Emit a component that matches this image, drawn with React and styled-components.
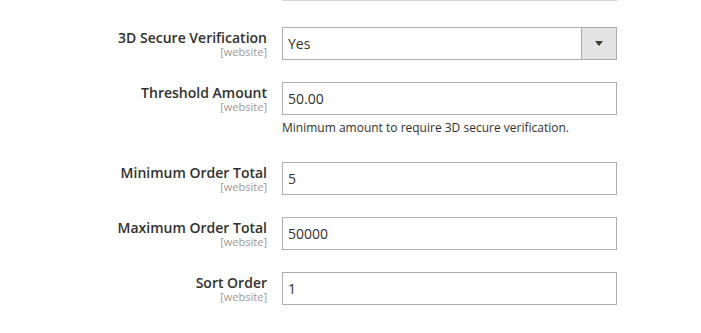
import styled, { createGlobalStyle } from "styled-components";

const GlobalStyle = createGlobalStyle`
  body {
    margin: 0;
    background: #fff;
    font-family: "Open Sans", "Liberation Sans", sans-serif;
    color: #303030;
  }
`;

const Page = styled.div`
  width: 701px;
  height: 333px;
  overflow: hidden;
  background: #fff;
`;

const Row = styled.div`
  display: grid;
  grid-template-columns: 267px 335px;
  column-gap: 15px;
  margin-bottom: ${(p) => p.gap || 22}px;
`;

const Rule = styled.div`
  grid-column: 2;
  height: 1px;
  background: #d6d6d6;
`;

const Label = styled.div`
  text-align: right;
  padding-top: 2px;
`;

const Title = styled.div`
  font-size: 14px;
  font-weight: 600;
  line-height: 17px;
  color: #303030;
`;

const Scope = styled.div`
  font-size: 11px;
  line-height: 12px;
  color: #999;
`;

const Control = styled.div`
  grid-column: 2;
`;

const Input = styled.div`
  box-sizing: border-box;
  height: 33px;
  border: 1px solid #adadad;
  padding: 0 9px 0 5px;
  display: flex;
  align-items: center;
  font-size: 14px;
  color: #303030;
  background: #fff;
`;

const Select = styled(Input)`
  padding-right: 0;
  justify-content: space-between;
`;

const Arrow = styled.div`
  width: 34px;
  height: 100%;
  border-left: 1px solid #adadad;
  background: #e3e3e3;
  display: flex;
  align-items: center;
  justify-content: center;
  &::after {
    content: "";
    border-left: 4px solid transparent;
    border-right: 4px solid transparent;
    border-top: 5px solid #41362f;
  }
`;

const Note = styled.div`
  font-size: 12px;
  line-height: 18px;
  margin-top: 4px;
  color: #303030;
`;

const fields = [
  { title: "Threshold Amount", value: "50.00", note: "Minimum amount to require 3D secure verification." },
  { title: "Minimum Order Total", value: "5" },
  { title: "Maximum Order Total", value: "50000" },
  { title: "Sort Order", value: "1" },
];

const Field = ({ title, children, gap }) => (
  <Row gap={gap}>
    <Label>
      <Title>{title}</Title>
      <Scope>[website]</Scope>
    </Label>
    <Control>{children}</Control>
  </Row>
);

export default function App() {
  return (
    <Page>
      <GlobalStyle />
      <Row gap={26}>
        <Rule />
      </Row>
      <Field title="3D Secure Verification">
        <Select>
          <span>Yes</span>
          <Arrow />
        </Select>
      </Field>
      {fields.map((f) => (
        <Field key={f.title} title={f.title} gap={f.note ? 25 : 22}>
          <Input>{f.value}</Input>
          {f.note && <Note>{f.note}</Note>}
        </Field>
      ))}
    </Page>
  );
}
